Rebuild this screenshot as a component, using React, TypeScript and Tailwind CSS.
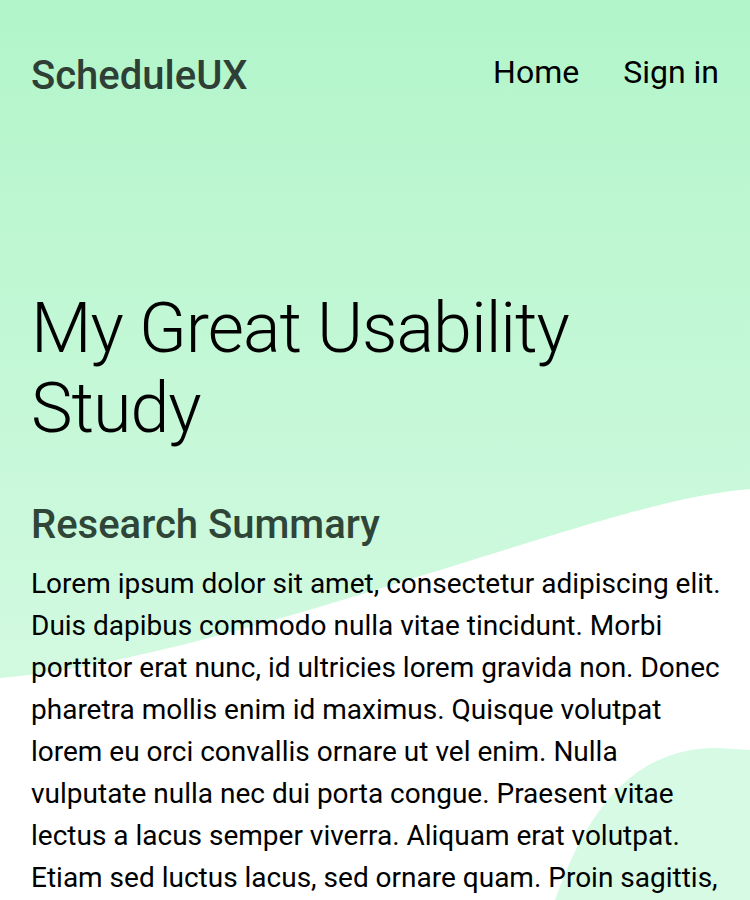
import React from "react";

const LOREM =
  "Lorem ipsum dolor sit amet, consectetur adipiscing elit. Duis dapibus commodo nulla vitae tincidunt. Morbi porttitor erat nunc, id ultricies lorem gravida non. Donec pharetra mollis enim id maximus. Quisque volutpat lorem eu orci convallis ornare ut vel enim. Nulla vulputate nulla nec dui porta congue. Praesent vitae lectus a lacus semper viverra. Aliquam erat volutpat. Etiam sed luctus lacus, sed ornare quam. Proin sagittis, nibh sed tincidunt tristique, sapien est pulvinar nunc, vel tristique ipsum arcu eu erat.";

// decorative background: green gradient, white wave, soft blob bottom right
function Backdrop() {
  return (
    <svg
      className="absolute left-0 top-0 w-full h-[900px]"
      viewBox="0 0 750 900"
      preserveAspectRatio="none"
      aria-hidden="true"
    >
      <defs>
        <linearGradient id="bg" x1="0" y1="0" x2="0" y2="1">
          <stop offset="0" stopColor="#b2f5ca" />
          <stop offset="0.8" stopColor="#d4fae2" />
        </linearGradient>
      </defs>
      <rect x="0" y="0" width="750" height="900" fill="url(#bg)" />
      <path
        d="M0,678 C120,668 280,620 450,567 C600,520 680,495 750,489 L750,900 L0,900 Z"
        fill="#ffffff"
      />
      <path d="M555,900 C590,800 640,748 717,748 L750,750 L750,900 Z" fill="#d6fae4" />
    </svg>
  );
}

export default function App() {
  return (
    <div className="relative min-h-[900px] overflow-hidden bg-white font-['Roboto',sans-serif]">
      <Backdrop />
      <div className="relative pl-[31px] pr-[28px]">
        <header className="flex items-start justify-between pt-[53px] pr-[3px]">
          <a className="text-[40px] leading-[46px] font-medium text-[#2e3f35]">ScheduleUX</a>
          <nav className="flex gap-[44px] text-[32px] leading-[38px] text-black">
            <a>Home</a>
            <a>Sign in</a>
          </nav>
        </header>

        <h1 className="mt-[189px] text-[70px] leading-[80px] tracking-[-1px] font-light text-black">
          My Great Usability Study
        </h1>

        <h2 className="mt-[52px] text-[40px] leading-[50px] font-medium text-[#2f4537]">
          Research Summary
        </h2>
        <p className="mt-[13px] text-[28px] leading-[42px] text-black">{LOREM}</p>
      </div>
    </div>
  );
}
